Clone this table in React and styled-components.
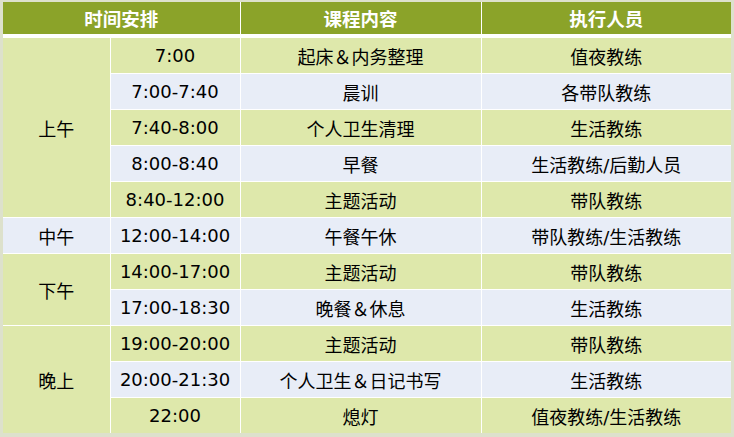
import React from 'react';
import styled, { createGlobalStyle } from 'styled-components';

const GlobalStyle = createGlobalStyle`
	html, body {
		margin: 0;
		padding: 0;
		background: #ffffff;
	}
`;

const colors = {
	head: '#8ba329',
	green: '#dee8ab',
	blue: '#e8edf7',
};

const Frame = styled.div`
	width: 734px;
	height: 437px;
	box-sizing: border-box;
	padding: 2px 3px 0 3px;
	background: #dde1cc;
	font-family: 'DejaVu Sans', 'Noto Sans CJK SC', sans-serif;
`;

const Table = styled.table`
	width: 728px;
	border-collapse: collapse;
	table-layout: fixed;
	border-style: hidden;
`;

const HeadCell = styled.th`
	height: 32px;
	padding: 0;
	background: ${colors.head};
	color: #ffffff;
	font-family: 'Noto Sans CJK SC', sans-serif;
	font-size: 18.5px;
	font-weight: 700;
	text-align: center;
	border: 1px solid #ffffff;
	border-bottom: 4px solid #ffffff;
`;

const Cell = styled.td`
	height: 35px;
	padding: 0;
	background: ${(p) => colors[p.$tone]};
	color: #000000;
	font-size: 18px;
	text-align: center;
	vertical-align: middle;
	border: 1px solid #ffffff;
	white-space: nowrap;
`;

const rows = [
	{ group: '上午', span: 5, tone: 'green', time: '7:00', task: '起床＆内务整理', who: '值夜教练' },
	{ time: '7:00-7:40', task: '晨训', who: '各带队教练' },
	{ time: '7:40-8:00', task: '个人卫生清理', who: '生活教练' },
	{ time: '8:00-8:40', task: '早餐', who: '生活教练/后勤人员' },
	{ time: '8:40-12:00', task: '主题活动', who: '带队教练' },
	{ group: '中午', span: 1, tone: 'blue', time: '12:00-14:00', task: '午餐午休', who: '带队教练/生活教练' },
	{ group: '下午', span: 2, tone: 'green', time: '14:00-17:00', task: '主题活动', who: '带队教练' },
	{ time: '17:00-18:30', task: '晚餐＆休息', who: '生活教练' },
	{ group: '晚上', span: 3, tone: 'green', time: '19:00-20:00', task: '主题活动', who: '带队教练' },
	{ time: '20:00-21:30', task: '个人卫生＆日记书写', who: '生活教练' },
	{ time: '22:00', task: '熄灯', who: '值夜教练/生活教练' },
];

export default function App() {
	return (
		<>
			<GlobalStyle />
			<Frame>
				<Table>
					<colgroup>
						<col style={{ width: 107 }} />
						<col style={{ width: 130 }} />
						<col style={{ width: 241 }} />
						<col style={{ width: 250 }} />
					</colgroup>
					<thead>
						<tr>
							<HeadCell colSpan={2}>时间安排</HeadCell>
							<HeadCell>课程内容</HeadCell>
							<HeadCell>执行人员</HeadCell>
						</tr>
					</thead>
					<tbody>
						{rows.map((r, i) => {
							const tone = i % 2 === 0 ? 'green' : 'blue';
							return (
								<tr key={i}>
									{r.group && (
										<Cell $tone={r.tone} rowSpan={r.span}>
											{r.group}
										</Cell>
									)}
									<Cell $tone={tone}>{r.time}</Cell>
									<Cell $tone={tone}>{r.task}</Cell>
									<Cell $tone={tone}>{r.who}</Cell>
								</tr>
							);
						})}
					</tbody>
				</Table>
			</Frame>
		</>
	);
}
